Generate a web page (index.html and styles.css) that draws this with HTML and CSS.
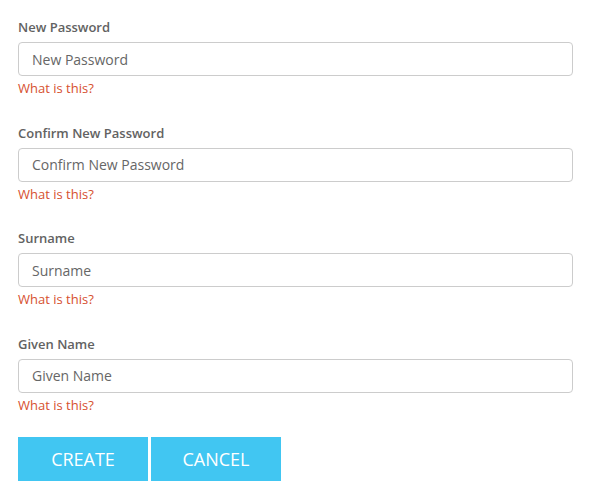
FILE: index.html
```html
<!DOCTYPE html>
<html>
<head>
<meta charset="utf-8">
<link rel="stylesheet" href="styles.css">
</head>
<body>
<form class="form">
  <div class="group">
    <label class="label">New Password</label>
    <input class="input" type="text" placeholder="New Password">
    <a class="help">What is this?</a>
  </div>
  <div class="group">
    <label class="label">Confirm New Password</label>
    <input class="input" type="text" placeholder="Confirm New Password">
    <a class="help">What is this?</a>
  </div>
  <div class="group">
    <label class="label">Surname</label>
    <input class="input" type="text" placeholder="Surname">
    <a class="help">What is this?</a>
  </div>
  <div class="group">
    <label class="label">Given Name</label>
    <input class="input" type="text" placeholder="Given Name">
    <a class="help">What is this?</a>
  </div>
  <div class="actions">
    <button type="button" class="btn">CREATE</button>
    <button type="button" class="btn">CANCEL</button>
  </div>
</form>
</body>
</html>
```

FILE: styles.css
```css
html, body {
  margin: 0;
  padding: 0;
  background: #fff;
}
body {
  font-family: "Open Sans", "Liberation Sans", sans-serif;
}
.form {
  padding: 18px 36px 0 18px;
  display: flex;
  flex-direction: column;
}
.group {
  display: flex;
  flex-direction: column;
  margin-bottom: 26.5px;
}
.label {
  font-size: 13px;
  line-height: 18px;
  font-weight: 600;
  color: #626262;
  margin-bottom: 6px;
}
.input {
  box-sizing: border-box;
  height: 34px;
  width: 555px;
  border: 1px solid #cccccc;
  border-radius: 4px;
  padding: 0 13px;
  font-family: "Open Sans", "Liberation Sans", sans-serif;
  font-size: 14px;
  color: #666;
  background: #fff;
  margin: 0;
}
.input::placeholder {
  color: #666;
  opacity: 1;
}
.help {
  margin-top: 3px;
  font-size: 13px;
  line-height: 18px;
  color: #d6502f;
}
.actions {
  display: flex;
  gap: 3px;
  margin-top: -3px;
}
.btn {
  width: 130px;
  height: 44px;
  border: 0;
  margin: 0;
  padding: 0;
  background: #41c6f2;
  color: #fff;
  font-family: "Open Sans", "Liberation Sans", sans-serif;
  font-size: 18px;
  border-radius: 0;
}
```
